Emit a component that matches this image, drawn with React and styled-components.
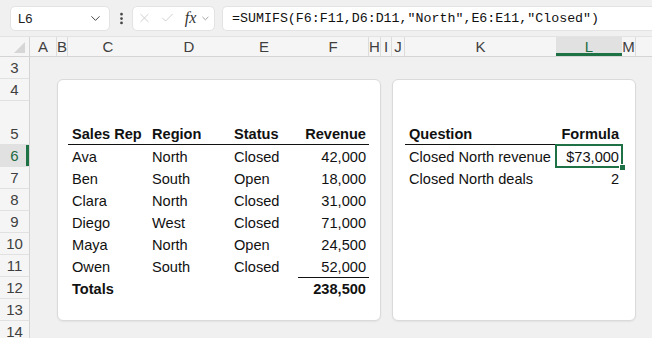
import styled, { createGlobalStyle } from "styled-components";
import { ChevronDown, X, Check, EllipsisVertical } from "lucide-react";

const Global = createGlobalStyle`
  html, body { margin: 0; padding: 0; }
  body {
    width: 652px;
    height: 338px;
    overflow: hidden;
    background: #f0f0f0;
    font-family: "Liberation Sans", Arial, sans-serif;
  }
`;

const COLS = "30px 27px 11px 80px 82px 68px 71px 12px 11px 13px 151px 66px 14px 1fr";
const ROWS = "22px 22px 44px 22px 22px 22px 22px 22px 22px 22px 22px 22px";

const Window = styled.div`
  display: flex;
  flex-direction: column;
  width: 652px;
  height: 338px;
  overflow: hidden;
  & > * { flex-shrink: 0; }
`;

const Toolbar = styled.div`
  display: flex;
  align-items: center;
  height: 36px;
  padding: 0 0 0 10px;
  background: #f0f0f0;
  box-sizing: border-box;
`;

const Box = styled.div`
  display: flex;
  align-items: center;
  height: 25px;
  background: #fff;
  border: 1px solid #e3e3e3;
  border-radius: 5px;
  box-sizing: border-box;
`;

const NameBox = styled(Box)`
  width: 100px;
  padding: 0 6px 0 7px;
  justify-content: space-between;
  font-size: 13px;
  color: #222;
`;

const Dots = styled.div`
  width: 22px;
  display: flex;
  justify-content: center;
  color: #444;
`;

const ActionBox = styled(Box)`
  width: 83px;
  padding: 0 3px 0 4px;
  gap: 8px;
  color: #c4c4c4;
`;

const Fx = styled.span`
  font-family: "Liberation Serif", serif;
  font-style: italic;
  font-size: 16px;
  color: #333;
  margin-left: 2px;
  margin-right: -4px;
`;

const FormulaBox = styled(Box)`
  flex: 1;
  margin-left: 7px;
  border-right: none;
  border-radius: 5px 0 0 5px;
  padding-left: 9px;
  font-family: "Liberation Mono", monospace;
  font-size: 13.3px;
  color: #111;
  white-space: nowrap;
`;

const HeaderRow = styled.div`
  display: grid;
  grid-template-columns: ${COLS};
  height: 19px;
  background: #f5f5f5;
  border-top: 1px solid #e3e3e3;
  border-bottom: 1px solid #d4d4d4;
`;

const Corner = styled.div`
  position: relative;
  border-right: 1px solid #d4d4d4;
  &::after {
    content: "";
    position: absolute;
    right: 4px;
    bottom: 3px;
    border-style: solid;
    border-width: 0 0 11px 11px;
    border-color: transparent transparent #d6d6d6 transparent;
  }
`;

const ColLetter = styled.div`
  display: flex;
  align-items: center;
  justify-content: center;
  font-size: 15px;
  color: ${(p) => (p.$active ? "#1e6b41" : "#3f3f3f")};
  background: ${(p) => (p.$active ? "#e1e1e1" : "transparent")};
  border-right: ${(p) => (p.$edge ? "1px solid #dcdcdc" : "none")};
  box-shadow: ${(p) => (p.$active ? "inset 0 -3px 0 #1e7145" : "none")};
  overflow: hidden;
`;

const Sheet = styled.div`
  display: grid;
  grid-template-columns: ${COLS};
  grid-template-rows: ${ROWS};
  background: #f0f0f0;
`;

const RowNum = styled.div`
  grid-column: 1;
  display: flex;
  align-items: flex-end;
  justify-content: center;
  padding-bottom: 2px;
  box-sizing: border-box;
  font-size: 15px;
  color: ${(p) => (p.$active ? "#1e6b41" : "#3f3f3f")};
  background: ${(p) => (p.$active ? "#e1e1e1" : "#f5f5f5")};
  border-bottom: 1px solid #e1e1e1;
  border-right: 1px solid #d4d4d4;
  box-shadow: ${(p) => (p.$active ? "inset -3px 0 0 #1e7145" : "none")};
`;

const Card = styled.div`
  grid-row: 2 / 12;
  grid-column: ${(p) => p.$cols};
  background: #fff;
  border: 1px solid #dadada;
  border-radius: 6px;
  box-shadow: 0 1px 2px rgba(0, 0, 0, 0.06);
  display: grid;
  grid-template-columns: ${(p) => p.$tracks};
  grid-template-rows: 44px 22px 22px 22px 22px 22px 22px 22px;
  align-content: start;
  padding: 21px 0 0 ${(p) => p.$left}px;
  box-sizing: border-box;
`;

const Cell = styled.div`
  display: flex;
  align-items: flex-end;
  justify-content: ${(p) => (p.$right ? "flex-end" : "flex-start")};
  padding: 0 3px 2px 4px;
  font-size: 14.6px;
  font-weight: ${(p) => (p.$bold ? 700 : 400)};
  color: #111;
  white-space: nowrap;
  box-sizing: border-box;
  border-bottom: ${(p) => (p.$under ? "1px solid #111" : "none")};
  border-top: ${(p) => (p.$over ? "1px solid #111" : "none")};
`;

const ActiveCell = styled(Cell)`
  position: relative;
  outline: 2px solid #1e7145;
  outline-offset: -1px;
  &::after {
    content: "";
    position: absolute;
    right: -4px;
    bottom: -4px;
    width: 5px;
    height: 5px;
    background: #1e7145;
    border: 1px solid #fff;
  }
`;

const letters = [
  ["A", true], ["B", true], ["C", false], ["D", false], ["E", false], ["F", true],
  ["H", true], ["I", true], ["J", true], ["K", false], ["L", false, true], ["M", true],
];

const sales = [
  ["Ava", "North", "Closed", "42,000"],
  ["Ben", "South", "Open", "18,000"],
  ["Clara", "North", "Closed", "31,000"],
  ["Diego", "West", "Closed", "71,000"],
  ["Maya", "North", "Open", "24,500"],
  ["Owen", "South", "Closed", "52,000"],
];

export default function App() {
  const rows = [3, 4, 5, 6, 7, 8, 9, 10, 11, 12, 13, 14];
  return (
    <Window>
      <Global />
      <Toolbar>
        <NameBox>
          <span>L6</span>
          <ChevronDown size={15} color="#444" strokeWidth={1.6} />
        </NameBox>
        <Dots>
          <EllipsisVertical size={15} strokeWidth={2.4} />
        </Dots>
        <ActionBox>
          <X size={18} strokeWidth={1.3} />
          <Check size={18} strokeWidth={1.3} />
          <Fx>fx</Fx>
          <ChevronDown size={13} color="#777" strokeWidth={1.5} />
        </ActionBox>
        <FormulaBox>=SUMIFS(F6:F11,D6:D11,"North",E6:E11,"Closed")</FormulaBox>
      </Toolbar>

      <HeaderRow>
        <Corner />
        {letters.map(([l, edge, active]) => (
          <ColLetter key={l} $edge={edge} $active={active}>
            {l}
          </ColLetter>
        ))}
      </HeaderRow>

      <Sheet>
        {rows.map((r) => (
          <RowNum key={r} $active={r === 6}>
            {r}
          </RowNum>
        ))}

        <Card $cols="3 / 9" $tracks="80px 82px 68px 71px" $left={10}>
          <Cell $bold $under>Sales Rep</Cell>
          <Cell $bold $under>Region</Cell>
          <Cell $bold $under>Status</Cell>
          <Cell $bold $under $right>Revenue</Cell>
          {sales.map((s) => [
            <Cell key={s[0] + "a"}>{s[0]}</Cell>,
            <Cell key={s[0] + "b"}>{s[1]}</Cell>,
            <Cell key={s[0] + "c"}>{s[2]}</Cell>,
            <Cell key={s[0] + "d"} $right>{s[3]}</Cell>,
          ])}
          <Cell $bold>Totals</Cell>
          <Cell />
          <Cell />
          <Cell $bold $right $over>238,500</Cell>
        </Card>

        <Card $cols="10 / 14" $tracks="151px 66px" $left={12}>
          <Cell $bold $under>Question</Cell>
          <Cell $bold $under $right>Formula</Cell>
          <Cell>Closed North revenue</Cell>
          <ActiveCell $right>$73,000</ActiveCell>
          <Cell>Closed North deals</Cell>
          <Cell $right>2</Cell>
        </Card>
      </Sheet>
    </Window>
  );
}
